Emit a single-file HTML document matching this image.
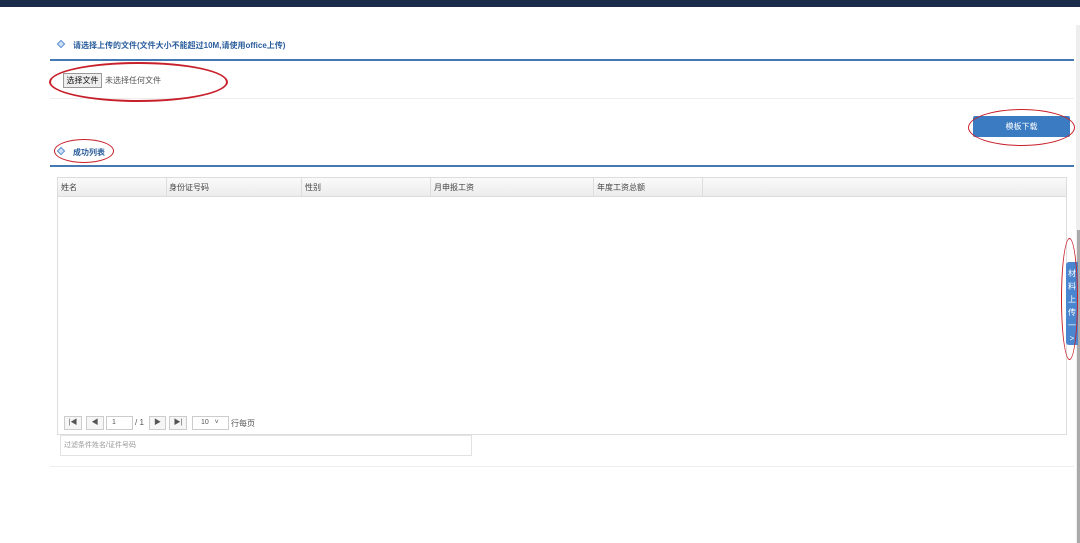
<!DOCTYPE html>
<html><head><meta charset="utf-8"><style>
*{margin:0;padding:0;box-sizing:border-box}
body{width:1080px;height:543px;overflow:hidden;background:#fff;font-family:"Liberation Sans","Noto Sans CJK SC",sans-serif;position:relative;color:#333}
.a{position:absolute}
.t{font-size:8px;color:#2a5d9c;font-weight:bold}
.dia{width:6px;height:6px;border:1.5px solid #5a8fd0;transform:rotate(45deg);background:#cfe0f5}
.hl{height:2px;background:#4479b3}
.th{font-size:8px;color:#444;top:182px}
.pb{border:1px solid #ccc;height:14px;top:416px;background:#f6f6f6;font-size:7px;color:#555;text-align:center;line-height:12px}
</style></head><body>
<div class="a" style="left:0;top:0;width:1080px;height:7px;background:#1b2b4a"></div>
<div class="a dia" style="left:58px;top:41px"></div>
<div class="a t" style="left:73px;top:40px">请选择上传的文件(文件大小不能超过10M,请使用office上传)</div>
<div class="a hl" style="left:50px;top:59px;width:1024px"></div>
<div class="a" style="left:50px;top:98px;width:1024px;height:1px;background:#eee"></div>
<div class="a" style="left:63px;top:73px;width:39px;height:15px;border:1px solid #999;background:#eee;font-size:8px;line-height:13px;text-align:center;color:#111">选择文件</div>
<div class="a" style="left:105px;top:75px;font-size:8px;color:#555">未选择任何文件</div>
<div class="a" style="left:49px;top:62px;width:179px;height:40px;border:2px solid #c8202a;border-radius:50%"></div>
<div class="a" style="left:973px;top:116px;width:97px;height:21px;background:#3a7bc2;border-radius:2px;color:#fff;font-size:8px;text-align:center;line-height:21px">模板下载</div>
<div class="a" style="left:968px;top:109px;width:107px;height:37px;border:1px solid #c8202a;border-radius:50%"></div>
<div class="a dia" style="left:58px;top:148px"></div>
<div class="a t" style="left:73px;top:147px">成功列表</div>
<div class="a" style="left:54px;top:139px;width:60px;height:24px;border:1px solid #c8202a;border-radius:50%"></div>
<div class="a hl" style="left:50px;top:165px;width:1024px"></div>
<div class="a" style="left:57px;top:177px;width:1010px;height:258px;border:1px solid #ddd"></div>
<div class="a" style="left:58px;top:178px;width:1008px;height:19px;background:linear-gradient(#fafafa,#ececec);border-bottom:1px solid #ddd"></div>
<div class="a" style="left:166px;top:178px;width:1px;height:19px;background:#ddd"></div>
<div class="a" style="left:301px;top:178px;width:1px;height:19px;background:#ddd"></div>
<div class="a" style="left:430px;top:178px;width:1px;height:19px;background:#ddd"></div>
<div class="a" style="left:593px;top:178px;width:1px;height:19px;background:#ddd"></div>
<div class="a" style="left:702px;top:178px;width:1px;height:19px;background:#ddd"></div>
<div class="a th" style="left:61px">姓名</div>
<div class="a th" style="left:169px">身份证号码</div>
<div class="a th" style="left:305px">性别</div>
<div class="a th" style="left:434px">月申报工资</div>
<div class="a th" style="left:597px">年度工资总额</div>
<div class="a pb" style="left:64px;width:18px">|◀</div>
<div class="a pb" style="left:86px;width:18px">◀</div>
<div class="a pb" style="left:106px;width:27px;background:#fff;text-align:left;padding-left:5px">1</div>
<div class="a" style="left:135px;top:418px;font-size:8px;color:#555">/ 1</div>
<div class="a pb" style="left:149px;width:17px">▶</div>
<div class="a pb" style="left:169px;width:18px">▶|</div>
<div class="a pb" style="left:192px;width:37px;background:#fff;text-align:left;padding-left:8px">10 &nbsp;&nbsp;˅</div>
<div class="a" style="left:231px;top:418px;font-size:8px;color:#555">行每页</div>
<div class="a" style="left:57px;top:434px;width:1010px;height:1px;background:#ddd"></div>
<div class="a" style="left:60px;top:435px;width:412px;height:21px;border:1px solid #e2e2e2;font-size:7px;color:#999;line-height:20px;padding-left:3px">过滤条件姓名/证件号码</div>
<div class="a" style="left:50px;top:466px;width:1024px;height:1px;background:#eee"></div>
<div class="a" style="left:1076px;top:25px;width:4px;height:518px;background:#eee"></div>
<div class="a" style="left:1077px;top:230px;width:3px;height:313px;background:#aaa"></div>
<div class="a" style="left:1066px;top:262px;width:12px;height:83px;background:#4a86cf;border-radius:3px 0 0 3px;color:#fff;font-size:8px;line-height:13px;text-align:center;padding-top:5px">材<br>料<br>上<br>传<br>一<br>&gt;</div>
<div class="a" style="left:1061px;top:238px;width:17px;height:122px;border:1px solid #c8202a;border-radius:50%"></div>
</body></html>
